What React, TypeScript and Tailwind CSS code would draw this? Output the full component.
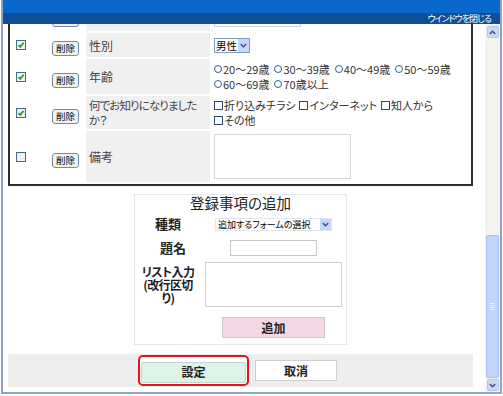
import React from 'react';

const jp = "font-['Noto_Sans_CJK_JP','Noto_Sans',sans-serif] [font-feature-settings:'palt']";

const CheckBox = ({ checked }: { checked: boolean }) => (
  <svg width="10" height="10" viewBox="0 0 10 10" className="block">
    <rect x="0.5" y="0.5" width="9" height="9" fill="#f2f2ee" stroke="#3f6a96" />
    {checked && <path d="M2.4 5 L4.2 6.9 L7.6 2.9" stroke="#22a322" strokeWidth="1.7" fill="none" />}
  </svg>
);

const DeleteButton = () => (
  <button className="w-[27px] h-[15px] rounded-[3px] border border-[#7189b0] bg-[#f3f3ee] text-[9.5px] leading-[13px] text-black">
    削除
  </button>
);

const Radio = ({ label }: { label: string }) => (
  <span className="inline-flex items-center mr-[5px] whitespace-nowrap">
    <span className="inline-block w-[8px] h-[8px] rounded-full border border-[#2f5f90] bg-white mr-px" />
    {label}
  </span>
);

const Check = ({ label }: { label: string }) => (
  <span className="inline-flex items-center mr-[4px] whitespace-nowrap">
    <span className="inline-block w-[9px] h-[9px] border border-[#2b4a6b] bg-white mr-px" />
    {label}
  </span>
);

const Chevron = ({ up }: { up?: boolean }) => (
  <svg width="7" height="5" viewBox="0 0 7 5">
    <path d={up ? 'M0.8 4 L3.5 1.2 L6.2 4' : 'M0.8 1 L3.5 3.8 L6.2 1'} stroke="#3c4f78" strokeWidth="1.4" fill="none" />
  </svg>
);

const rows = [
  { checked: true, label: '性別', kind: 'select', text: 'text-[12px]' },
  { checked: true, label: '年齢', kind: 'radio', text: 'text-[12px]' },
  { checked: true, label: '何でお知りになりました\nか？', kind: 'check', text: 'text-[11.5px] tracking-[-0.9px]' },
  { checked: false, label: '備考', kind: 'textarea', text: 'text-[12px]' },
];

const rowHeights: Record<string, string> = {
  select: 'h-[22px]',
  radio: 'h-[35px]',
  check: 'h-[33px]',
  textarea: 'h-[51px]',
};

const Value = ({ kind }: { kind: string }) => {
  if (kind === 'select')
    return (
      <div className="w-[36px] h-[15px] border border-[#7f9db9] bg-white flex items-center">
        <span className="flex-1 text-[10.5px] leading-[13px] text-black pl-px whitespace-nowrap">男性</span>
        <span className="w-[11px] h-[13px] bg-[#c4d6fb] flex items-center justify-center">
          <Chevron />
        </span>
      </div>
    );
  if (kind === 'radio')
    return (
      <div className="text-[11px] leading-[15px] text-[#333] flex flex-wrap">
        {['20～29歳', '30～39歳', '40～49歳', '50～59歳', '60～69歳', '70歳以上'].map((l) => (
          <Radio key={l} label={l} />
        ))}
      </div>
    );
  if (kind === 'check')
    return (
      <div className="text-[11px] leading-[15px] text-[#333] flex flex-wrap">
        {['折り込みチラシ', 'インターネット', '知人から', 'その他'].map((l) => (
          <Check key={l} label={l} />
        ))}
      </div>
    );
  return <div className="w-[137px] h-[45px] border border-[#d4d4d4] bg-white" />;
};

const App = () => {
  return (
    <div className={`w-[503px] h-[396px] bg-white overflow-hidden ${jp}`}>
      <div className="ml-px w-[501px] h-[394px] border-x-2 border-b-2 border-[#8ea3cc] flex flex-col">
        {/* title bar */}
        <div className="h-[24px] flex flex-col shrink-0">
          <div className="h-[13px] bg-[#0868cc]" />
          <div className="h-[11px] bg-[#104f98] flex items-center justify-end pr-[9px]">
            <span className="text-[9px] leading-[10px] tracking-[-1px] text-white">ウインドウを閉じる</span>
          </div>
        </div>

        <div className="flex flex-1 min-h-0">
          {/* scrolled content */}
          <div className="flex-1 overflow-hidden">
            <div className="-mt-[37px] ml-[5px] w-[465px]">
              <div className="border-2 border-[#2e2e2e]">
                <table className="table-fixed w-full border-separate border-spacing-[2px]">
                  <colgroup>
                    <col className="w-[33px]" />
                    <col className="w-[37px]" />
                    <col className="w-[124px]" />
                    <col />
                  </colgroup>
                  <tbody>
                    {/* row scrolled mostly out of view */}
                    <tr className="h-[40px]">
                      <td className="pl-[4px] align-top"><CheckBox checked /></td>
                      <td className="pl-[5px] align-bottom pb-[4px]">
                        <div className="w-[27px] h-[15px] rounded-[3px] border border-[#7189b0] bg-[#f3f3ee]" />
                      </td>
                      <td className="bg-[#f0f0f0]" />
                      <td className="pl-[2px] align-bottom pb-[4px]">
                        <div className="w-[87px] h-[18px] border border-[#d0d0d0] bg-white" />
                      </td>
                    </tr>
                    {rows.map((r) => (
                      <tr key={r.label} className={rowHeights[r.kind]}>
                        <td className="pl-[4px] align-middle"><CheckBox checked={r.checked} /></td>
                        <td className="pl-[5px] align-middle"><DeleteButton /></td>
                        <td className={`bg-[#f0f0f0] pl-[3px] leading-[15px] text-[#444] align-middle whitespace-pre-line ${r.text}`}>
                          {r.label}
                        </td>
                        <td className="pl-[2px] align-middle"><Value kind={r.kind} /></td>
                      </tr>
                    ))}
                  </tbody>
                </table>
              </div>

              {/* add item box */}
              <div className="mt-[8px] mx-auto w-[213px] border border-[#e6e6e6] flex flex-col pb-[6px]">
                <div className="h-[17px] text-center text-[14.5px] leading-[16px] text-[#222]">登録事項の追加</div>
                <div className="h-[24px] flex items-center">
                  <div className="w-[62px] ml-[2px] text-center text-[13px] font-bold text-[#222]">種類</div>
                  <div className="ml-[6px] w-[137px] flex justify-center">
                    <div className="w-[117px] h-[13px] border border-[#dfe6f0] bg-white flex items-center">
                      <span className="flex-1 pl-[2px] text-[9px] leading-[11px] text-black whitespace-nowrap">追加するフォームの選択</span>
                      <span className="w-[11px] h-[11px] bg-[#c4d6fb] flex items-center justify-center"><Chevron /></span>
                    </div>
                  </div>
                </div>
                <div className="h-[23px] flex items-center">
                  <div className="w-[62px] ml-[2px] text-center text-[13px] font-bold text-[#222] pl-[10px]">題名</div>
                  <div className="ml-[6px] w-[137px] flex justify-center">
                    <div className="w-[87px] h-[16px] border border-[#c8c8c8] bg-white" />
                  </div>
                </div>
                <div className="h-[50px] flex items-center">
                  <div className="w-[62px] ml-[2px] text-center text-[12px] tracking-[-0.6px] leading-[13px] font-bold text-[#222] whitespace-pre-line">
                    {'リスト入力\n(改行区切\nり)'}
                  </div>
                  <div className="ml-[6px] w-[137px] h-[45px] border border-[#cfcfcf] bg-white" />
                </div>
                <div className="mt-[8px] flex">
                  <div className="ml-[70px] w-[137px] flex justify-center">
                    <button className="w-[103px] h-[21px] bg-[#f5d8e5] border border-[#cbcbcb] text-[12px] font-bold text-[#222]">
                      追加
                    </button>
                  </div>
                </div>
              </div>

              {/* footer buttons */}
              <div className="mt-[9px] h-[33px] bg-[#eeeeee] flex items-center justify-center gap-[6px] pr-[6px]">
                <div className="rounded-[5px] border-2 border-[#e4131c] bg-white p-[1px]">
                  <button className="w-[105px] h-[21px] bg-[#dbf4e5] border border-[#c4d6c9] rounded-[2px] text-[12px] font-bold text-[#222]">
                    設定
                  </button>
                </div>
                <button className="w-[82px] h-[21px] bg-white border border-[#cfcfcf] text-[12px] font-bold text-[#222]">
                  取消
                </button>
              </div>
            </div>
          </div>

          {/* scrollbar */}
          <div className="w-[15px] bg-[#f4f3ee] flex flex-col items-center pt-[2px] pb-[1px]">
            <div className="w-[12px] h-[12px] rounded-[2px] bg-[#c9d9f8] border border-[#b3c7ee] flex items-center justify-center">
              <Chevron up />
            </div>
            <div className="flex-1 w-full flex flex-col justify-end items-center pb-[1px]">
              <div className="w-[13px] h-[143px] rounded-[2px] bg-[#c2d4fc] border border-[#a9bff2] flex flex-col items-center justify-center gap-[1px]">
                {[0, 1, 2, 3].map((i) => (
                  <div key={i} className="w-[5px] h-px bg-[#e6edfd]" />
                ))}
              </div>
            </div>
            <div className="w-[12px] h-[12px] rounded-[2px] bg-[#c9d9f8] border border-[#b3c7ee] flex items-center justify-center">
              <Chevron />
            </div>
          </div>
        </div>
      </div>
    </div>
  );
};

export default App;
